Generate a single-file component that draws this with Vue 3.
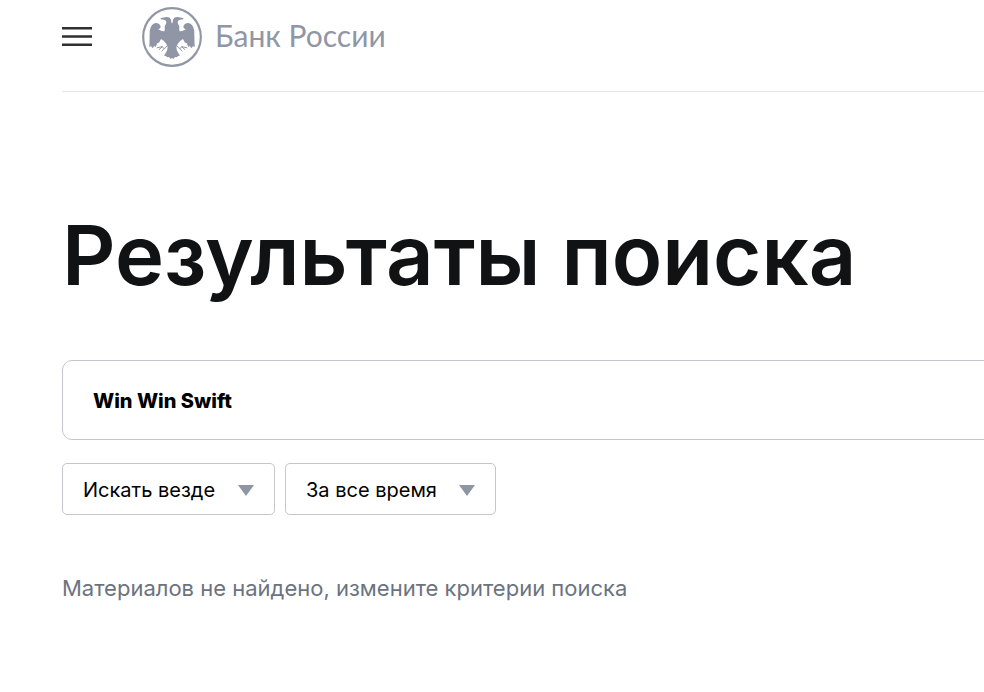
<script setup>
import { ref } from 'vue'

const query = ref('Win Win Swift')
const scope = ref('all')
const period = ref('any')
</script>

<template>
  <div class="page">
    <header class="header">
      <button class="menu" type="button" aria-label="Меню">
        <svg viewBox="0 0 30 19" aria-hidden="true">
          <path d="M0 1.2H30M0 9.5H30M0 17.8H30" stroke="currentColor" stroke-width="2.4" />
        </svg>
      </button>
      <a class="brand" href="#">
        <svg class="emblem" viewBox="0 0 180 180" aria-hidden="true">
          <circle cx="90" cy="90" r="86.5" fill="none" stroke="currentColor" stroke-width="6.5" />
          <g id="half">
            <path fill="currentColor" d="M91 52 L88 46 Q88 36 83 32 Q76 28 68 31 L55 34 L57 37 L68 39 Q75 43 72 50 Q66 57 68 65 Q70 73 63 73 Q55 72 48 66 Q54 67 56 61 Q56 50 43 48 Q32 48 26 61 Q22 70 23 86 L22 121 L27 117 L31 124 L37 117 L41 120 L46 108 L51 107 L57 96 L66 102 L73 111 L77 121 L75 131 L66 146 L72 147 L75 151 L81 150 L85 155 L91 153 Z" />
            <path fill="none" stroke="currentColor" stroke-width="3" stroke-linejoin="round" stroke-linecap="round" d="M75 117 Q72 122 66 125 L61 119 L46 122 M61 119 L52 127 M66 125 L60 132" />
          </g>
          <use href="#half" transform="translate(180 0) scale(-1 1)" />
        </svg>
        <span class="brand-name">Банк России</span>
      </a>
    </header>

    <main>
      <h1>Результаты поиска</h1>
      <form @submit.prevent>
        <input v-model="query" class="query" type="text" aria-label="Поиск" />
        <div class="filters">
          <div class="select">
            <select v-model="scope" aria-label="Где искать">
              <option value="all">Искать везде</option>
            </select>
            <svg viewBox="0 0 16 11" aria-hidden="true"><path d="M0 0H16L8 11Z" /></svg>
          </div>
          <div class="select">
            <select v-model="period" aria-label="Период">
              <option value="any">За все время</option>
            </select>
            <svg viewBox="0 0 16 11" aria-hidden="true"><path d="M0 0H16L8 11Z" /></svg>
          </div>
        </div>
      </form>
      <p class="empty">Материалов не найдено, измените критерии поиска</p>
    </main>
  </div>
</template>

<style>
body {
  background: #fff;
  overflow-x: hidden;
}
</style>

<style scoped>
.page {
  padding-left: 62px;
  font-family: Inter, "Liberation Sans", sans-serif;
  color: #000;
}
.header {
  display: flex;
  align-items: flex-start;
  gap: 50px;
  box-sizing: border-box;
  height: 92px;
  padding-top: 7px;
  border-bottom: 1px solid #e6e7ea;
}
.menu {
  width: 30px;
  height: 19px;
  margin-top: 20px;
  padding: 0;
  border: 0;
  background: none;
  color: #2f2f35;
}
.menu svg {
  display: block;
  width: 30px;
  height: 19px;
}
.brand {
  display: flex;
  align-items: flex-start;
  gap: 13px;
  color: #9096a5;
  text-decoration: none;
}
.emblem {
  width: 60px;
  height: 60px;
}
.brand-name {
  font-family: Lato, "Liberation Sans", sans-serif;
  font-size: 30px;
  line-height: 56px;
  white-space: nowrap;
}
h1 {
  margin: 112px 0 0;
  font-size: 83px;
  line-height: 102px;
  font-weight: 600;
  color: #111214;
  white-space: nowrap;
}
form {
  margin-top: 54px;
}
.query {
  display: block;
  box-sizing: border-box;
  width: calc(100% + 12px);
  height: 80px;
  padding: 2px 30px 0;
  border: 1px solid #c4c6cb;
  border-radius: 10px;
  font: 800 20px/24px Inter, "Liberation Sans", sans-serif;
  color: #000;
  background: #fff;
}
.filters {
  display: flex;
  gap: 10px;
  margin-top: 23px;
}
.select {
  display: grid;
  align-items: center;
}
.select > * {
  grid-area: 1 / 1;
}
.select select {
  appearance: none;
  box-sizing: border-box;
  height: 52px;
  padding: 2px 58px 0 20px;
  border: 1px solid #c4c6cb;
  border-radius: 5px;
  font: 400 20px/24px Inter, "Liberation Sans", sans-serif;
  color: #000;
  background: #fff;
}
.select svg {
  justify-self: end;
  width: 16px;
  height: 11px;
  margin: 3px 21px 0 0;
  fill: #8e95a3;
  pointer-events: none;
}
.empty {
  margin: 58px 0 0;
  font-size: 22px;
  line-height: 30px;
  color: #6c737f;
}
</style>
